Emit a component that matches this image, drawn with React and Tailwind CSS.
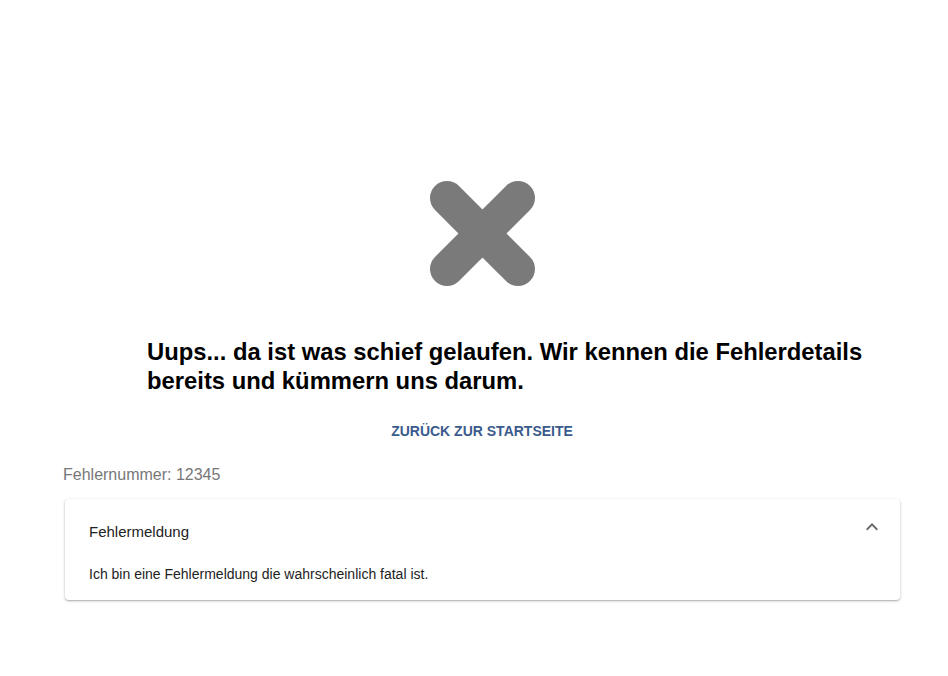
import React, { useState } from 'react';

const ErrorPage = () => {
    const [open, setOpen] = useState(true);

    return (
        <div className="min-h-screen bg-white font-['Liberation_Sans',Arial,sans-serif] pt-[180px]">
            <div className="flex justify-center pl-[16px]">
                <svg width="107" height="107" viewBox="0 0 107 107">
                    <line x1="18" y1="18" x2="89" y2="89" stroke="#7a7a7a" strokeWidth="34" strokeLinecap="round" />
                    <line x1="89" y1="18" x2="18" y2="89" stroke="#7a7a7a" strokeWidth="34" strokeLinecap="round" />
                </svg>
            </div>
            <h1 className="ml-[147px] mt-[50px] w-[745px] text-[23.8px] leading-[29px] font-bold text-black">
                Uups... da ist was schief gelaufen. Wir kennen die Fehlerdetails bereits und kümmern uns darum.
            </h1>
            <div className="flex justify-center pl-[16px] mt-[26px]">
                <button className="text-[14px] font-bold uppercase text-[#3a5b8c]">
                    Zurück zur Startseite
                </button>
            </div>
            <div className="px-[63px] mt-[21px]">
                <p className="text-[16px] text-[#777777]">Fehlernummer: 12345</p>
                <div className="mt-[12px] ml-[2px] mr-[-15px] rounded bg-white shadow-[0_1px_3px_rgba(0,0,0,0.25),0_1px_1px_rgba(0,0,0,0.12)]">
                    <div
                        onClick={() => setOpen(!open)}
                        className="flex items-center justify-between pl-[24px] pr-[16px] pt-[22px] pb-[14px] cursor-pointer"
                    >
                        <span className="text-[15px] text-[#222222]">Fehlermeldung</span>
                        <svg width="24" height="24" viewBox="0 0 24 24" className={open ? 'mt-[-10px]' : 'mt-[-10px] rotate-180'}>
                            <path d="M12 8l-6 6 1.41 1.41L12 10.83l4.59 4.58L18 14z" fill="#6b6b6b" />
                        </svg>
                    </div>
                    {open && (
                        <div className="pl-[24px] pr-[22px] pb-[15px] pt-[6px]">
                            <p className="text-[14px] text-[#222222]">Ich bin eine Fehlermeldung die wahrscheinlich fatal ist.</p>
                        </div>
                    )}
                </div>
            </div>
        </div>
    );
};

export default function App() {
    return <ErrorPage />;
}
